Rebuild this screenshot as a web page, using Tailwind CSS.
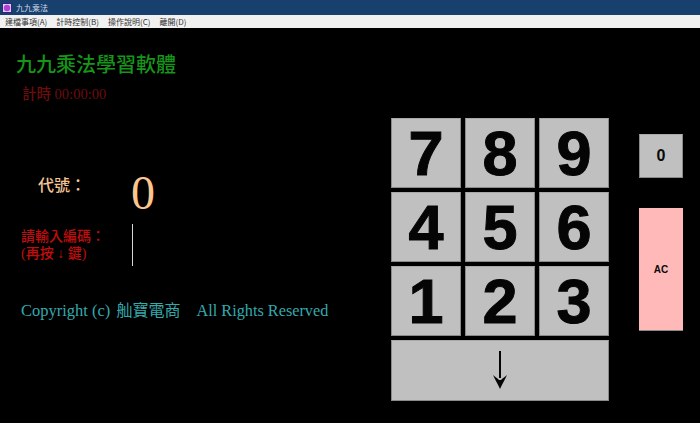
<!DOCTYPE html>
<html lang="zh-Hant"><head><meta charset="utf-8">
<script src="https://cdn.jsdelivr.net/npm/@tailwindcss/browser@4"></script>
</head>
<body class="w-[700px] h-[423px] overflow-hidden bg-black font-['Liberation_Serif','Noto_Sans_CJK_TC',serif]">
<div class="h-[15px] bg-[#17406f] flex items-center pl-[2px] gap-[4px]">
  <svg width="10" height="10" viewBox="0 0 10 10"><rect x="0" y="0" width="10" height="10" fill="#3a1f86"/><rect x="1" y="1" width="8" height="8" fill="#d9d3f2"/><circle cx="5" cy="5" r="3.2" fill="#b53fd6"/></svg>
  <span class="text-[8px] leading-none text-[#d5dee9] font-['Noto_Sans_CJK_TC',sans-serif]">九九乘法</span>
</div>
<div class="h-[13px] bg-[#f1f1f1] flex items-center pl-[5px] gap-[9px] text-[8px] leading-none text-[#333] font-['Noto_Sans_CJK_TC',sans-serif]">
  <span>建檔事項(A)</span><span>計時控制(B)</span><span>操作說明(C)</span><span>離開(D)</span>
</div>
<div class="flex h-[395px]">
  <div class="w-[391px] flex flex-col">
    <div class="ml-[16px] mt-[25px] text-[20px] leading-[24px] font-medium text-[#16951a]">九九乘法學習軟體</div>
    <div class="ml-[22px] mt-[8px] text-[14.5px] leading-[18px] font-medium text-[#6c0d0d]">計時 00:00:00</div>
    <div class="flex items-center mt-[64px] h-[50px]">
      <div class="ml-[38px] w-[94px] -mt-[13px] text-[16px] leading-none font-medium text-[#f3c495]">代號：</div>
      <div class="text-[48px] leading-none mt-[2px] -ml-[1px] text-[#fdc58f]">0</div>
    </div>
    <div class="flex items-center mt-[7px] h-[42px]">
      <div class="ml-[21px] w-[111px] text-[14px] leading-[17px] font-medium text-[#c00d0d] whitespace-pre">請輸入編碼：<br>(再按 ↓ 鍵)</div>
      <div class="w-px h-[42px] bg-[#d8d8d8]"></div>
    </div>
    <div class="ml-[21px] mt-[35px] flex items-baseline text-[#34a9ad] whitespace-pre">
      <span class="text-[16.5px] leading-[20px]">Copyright (c) </span><span class="text-[16px] leading-[20px] ml-[2px]">舢寶電商</span><span class="text-[16.25px] leading-[20px] ml-[16px]">All Rights Reserved</span>
    </div>
  </div>
  <div class="w-[218px] mt-[90px] grid grid-cols-3 grid-rows-[70px_70px_70px_61px] gap-[4px] h-[283px] font-['Liberation_Sans',sans-serif] font-bold text-[63px] text-[#050505] [-webkit-text-stroke:1px_#050505]">
    <div class="bg-[#c0c0c0] border border-[#8a8a8a] border-t-[#a8a8a8] flex items-center justify-center">7</div>
    <div class="bg-[#c0c0c0] border border-[#8a8a8a] border-t-[#a8a8a8] flex items-center justify-center">8</div>
    <div class="bg-[#c0c0c0] border border-[#8a8a8a] border-t-[#a8a8a8] flex items-center justify-center">9</div>
    <div class="bg-[#c0c0c0] border border-[#8a8a8a] border-t-[#a8a8a8] flex items-center justify-center">4</div>
    <div class="bg-[#c0c0c0] border border-[#8a8a8a] border-t-[#a8a8a8] flex items-center justify-center">5</div>
    <div class="bg-[#c0c0c0] border border-[#8a8a8a] border-t-[#a8a8a8] flex items-center justify-center">6</div>
    <div class="bg-[#c0c0c0] border border-[#8a8a8a] border-t-[#a8a8a8] flex items-center justify-center">1</div>
    <div class="bg-[#c0c0c0] border border-[#8a8a8a] border-t-[#a8a8a8] flex items-center justify-center">2</div>
    <div class="bg-[#c0c0c0] border border-[#8a8a8a] border-t-[#a8a8a8] flex items-center justify-center">3</div>
    <div class="col-span-3 bg-[#c0c0c0] border border-[#8a8a8a] border-t-[#a8a8a8] flex items-center justify-center">
      <svg width="16" height="40" viewBox="0 0 16 40" class="-mt-[2px]"><path d="M7 1H9V28H7Z" fill="#050505"/><path d="M1 25 C3.5 27 5.5 28.5 7 30 H9 C10.5 28.5 12.5 27 15 25 C13 30 10 34 8 39 C6 34 3 30 1 25Z" fill="#050505"/></svg>
    </div>
  </div>
  <div class="ml-[30px] mt-[106px] w-[44px] flex flex-col gap-[30px] font-['Liberation_Sans',sans-serif] font-bold text-[#0a0a0a]">
    <div class="h-[44px] bg-[#c0c0c0] border border-[#8a8a8a] border-t-[#a8a8a8] flex items-center justify-center text-[16px]">0</div>
    <div class="h-[123px] bg-[#ffb9b9] border-b border-[#8a8a8a] flex items-center justify-center text-[10px]">AC</div>
  </div>
</div>
</body></html>
